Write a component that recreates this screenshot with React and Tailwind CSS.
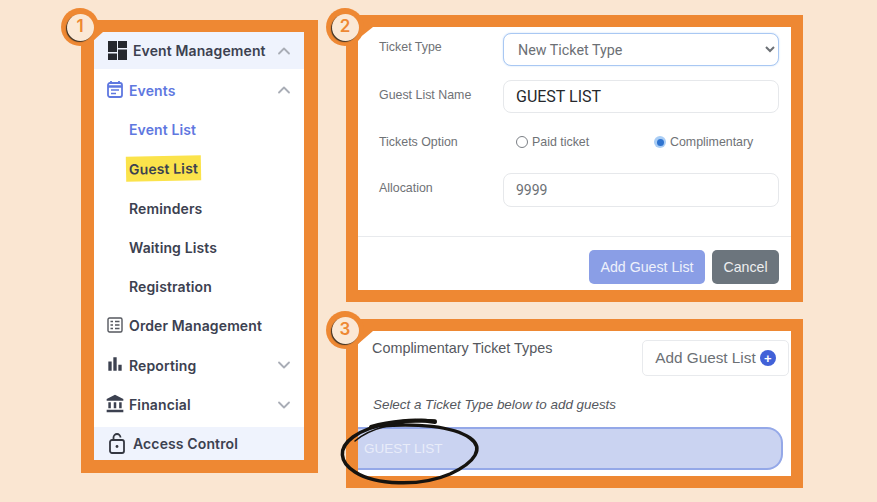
import React from "react";
import { MdBarChart, MdAccountBalance } from "react-icons/md";
import { ChevronUp, ChevronDown } from "lucide-react";

function Badge({ n, cls }) {
  return (
    <div className={"absolute flex items-center justify-center rounded-full bg-[#ee8833] w-[38px] h-[38px] " + cls}>
      <div className="flex items-center justify-center w-[27px] h-[27px] rounded-full bg-[#fbe8d5] shadow-[-1px_1px_1px_#3a3025] text-[#ee8833] text-[17px] font-semibold font-['Inter',sans-serif]">
        {n}
      </div>
    </div>
  );
}

function Corner({ cls }) {
  return <div className={"absolute left-0 top-0 bg-[#ee8833] [clip-path:polygon(0_0,100%_0,0_100%)] " + cls}></div>;
}

function DashIcon() {
  return (
    <svg width="19" height="19" viewBox="0 0 19 19" fill="#26282e" className="shrink-0">
      <rect x="0" y="0" width="9" height="11" />
      <rect x="10" y="0" width="9" height="7" />
      <rect x="0" y="12.5" width="9" height="6.5" />
      <rect x="10" y="8.5" width="9" height="10.5" />
    </svg>
  );
}
function CalendarIcon() {
  return (
    <svg width="16" height="18" viewBox="0 0 16 18" fill="none" stroke="#5f78e0" strokeWidth="1.8" className="-translate-y-[1px]">
      <rect x="1" y="3" width="14" height="14" rx="2" />
      <path d="M1 6.5h14" strokeWidth="2.5" />
      <path d="M4 1v3M12 1v3" />
      <path d="M4 10h8M4 13.5h5" strokeWidth="1.4" />
    </svg>
  );
}
function OrderIcon() {
  return (
    <svg width="16" height="16" viewBox="0 0 16 16" fill="none" stroke="#55585f" strokeWidth="1.4" className="-translate-y-[1px]">
      <rect x="1" y="1" width="14" height="14" rx="1.5" />
      <path d="M3.5 4.5h2.5M3.5 8h2.5M3.5 11.5h2.5M8 4.5h4.5M8 8h4.5M8 11.5h4.5" strokeWidth="1.6" />
    </svg>
  );
}
function LockIcon() {
  return (
    <svg width="16" height="21" viewBox="0 0 16 21" fill="none" stroke="#343741" strokeWidth="1.8" className="shrink-0">
      <rect x="1" y="7" width="14" height="13" rx="2" />
      <path d="M4.5 7V4.5a3.5 3.5 0 0 1 7 0" />
      <circle cx="8" cy="13.5" r="1.4" fill="#343741" stroke="none" />
    </svg>
  );
}

function Row({ icon, label, chev, cls = "h-[39.3px]", text = "text-[#3c4150]" }) {
  return (
    <div className={"flex items-center pr-[10px] pl-[13px] gap-[6px] " + cls}>
      <span className="flex w-[16px] justify-center shrink-0">{icon}</span>
      <span className={"flex-1 " + text}>{label}</span>
      {chev === "up" && <ChevronUp size={20} strokeWidth={2.2} className="text-[#a9adb6]" />}
      {chev === "down" && <ChevronDown size={20} strokeWidth={2.2} className="text-[#a9adb6]" />}
    </div>
  );
}
function Sub({ children, cls = "text-[#3c4150]" }) {
  return <div className={"flex items-center h-[39.3px] pl-[35px] " + cls}>{children}</div>;
}

function Sidebar() {
  return (
    <div className="relative w-[237px] h-[453px] border-[13px] border-t-[12px] border-r-[14px] border-[#ee8833] bg-white">
      <div className="flex flex-col text-[14px] font-semibold tracking-[0.12px] font-['Inter',sans-serif]">
        <div className="flex items-center h-[37px] bg-[#eff3fd] pl-[14px] pr-[10px] gap-[6px]">
          <DashIcon />
          <span className="flex-1 text-[#3c4150]">Event Management</span>
          <ChevronUp size={20} strokeWidth={2.2} className="text-[#a9adb6]" />
        </div>
        <Row cls="h-[39.3px] mt-[1.5px]" icon={<CalendarIcon />} label="Events" text="text-[#5f78e0]" chev="up" />
        <Sub cls="text-[#5f78e0]">Event List</Sub>
        <Sub>
          <span className="bg-[#fbe34b] px-[3px] -ml-[3px] py-[2px] rotate-[-1deg]">Guest List</span>
        </Sub>
        <Sub>Reminders</Sub>
        <Sub>Waiting Lists</Sub>
        <Sub>Registration</Sub>
        <Row icon={<OrderIcon />} label="Order Management" />
        <Row icon={<MdBarChart size={20} className="text-[#3c4150] shrink-0 -translate-y-[1px]" />} label="Reporting" chev="down" />
        <Row icon={<MdAccountBalance size={20} className="text-[#3c4150] shrink-0 -translate-y-[1px]" />} label="Financial" chev="down" />
        <div className="flex items-center h-[33px] mt-[3px] bg-[#eff3fd] pl-[15px] gap-[8px] text-[#3c4150]">
          <LockIcon />
          <span>Access Control</span>
        </div>
      </div>
      <Corner cls="w-[9px] h-[8px]" />
      <Badge n="1" cls="-left-[33px] -top-[24px]" />
    </div>
  );
}

function Label({ children, cls = "pt-[5px]" }) {
  return <div className={"w-[124px] text-[12.4px] text-[#6f7276] " + cls}>{children}</div>;
}

function Form() {
  return (
    <div className="relative w-[457px] h-[287px] border-[12px] border-[#ee8833] bg-white font-['Liberation_Sans',sans-serif]">
      <div className="pl-[21px] pt-[6px]">
        <div className="flex items-start">
          <Label>Ticket Type</Label>
          <select className="w-[276px] h-[33px] pl-[10px] pr-[4px] text-[14.3px] text-[#6c7075] bg-white rounded-[8px] border border-[#a9c8f3] shadow-[0_0_2px_#c7dcf8] outline-none font-['Roboto',sans-serif]">
            <option>New Ticket Type</option>
          </select>
        </div>
        <div className="flex items-start mt-[14px]">
          <Label cls="pt-[6px]">Guest List Name</Label>
          <div className="w-[276px] h-[33px] flex items-center pl-[12px] text-[16px] text-[#26282c] rounded-[8px] border border-[#e6e8eb] font-['Roboto',sans-serif]">
            GUEST LIST
          </div>
        </div>
        <div className="flex items-center h-[29px] mt-[15px] text-[12.4px] text-[#6f7276]">
          <div className="w-[124px]">Tickets Option</div>
          <div className="flex items-center w-[151px] pl-[13px] gap-[4px]">
            <span className="w-[12px] h-[12px] rounded-full border border-[#7b7f85] bg-white"></span>
            <span>Paid ticket</span>
          </div>
          <div className="flex items-center gap-[4px]">
            <span className="flex items-center justify-center w-[12px] h-[12px] rounded-full bg-[#a9cdf5]">
              <span className="w-[7px] h-[7px] rounded-full bg-[#2f74d0]"></span>
            </span>
            <span>Complimentary</span>
          </div>
        </div>
        <div className="flex items-start mt-[16px]">
          <Label cls="pt-[6px]">Allocation</Label>
          <div className="w-[276px] h-[34px] flex items-center pl-[12px] text-[14px] text-[#6c7075] rounded-[8px] border border-[#e6e8eb] font-['Roboto',sans-serif]">
            9999
          </div>
        </div>
      </div>
      <div className="mt-[29px] border-t border-[#e8eaed] pt-[13px] pr-[12px] flex justify-end gap-[7px]">
        <div className="flex items-center justify-center w-[116px] h-[34px] pt-[1px] rounded-[5px] bg-[#8a9ee6] text-[14.2px] text-[#eef1fb]">
          Add Guest List
        </div>
        <div className="flex items-center justify-center w-[67px] h-[34px] pt-[1px] rounded-[5px] bg-[#6c757d] text-[14.2px] text-[#eceeef]">
          Cancel
        </div>
      </div>
      <Corner cls="w-[15px] h-[12px]" />
      <Badge n="2" cls="-left-[32px] -top-[19px]" />
    </div>
  );
}

function TicketTypes() {
  return (
    <div className="relative w-[457px] h-[169px] border-[12px] border-[#ee8833] bg-white font-['Liberation_Sans',sans-serif]">
      <div className="flex items-start justify-between pl-[14px] pr-[2px] pt-[9px]">
        <div className="text-[14.4px] text-[#55585e] -mt-[2px]">Complimentary Ticket Types</div>
        <div className="flex items-center justify-center gap-[4px] w-[147px] h-[36px] rounded-[5px] border border-[#e8eaed] text-[15.3px] text-[#6c7075]">
          Add Guest List
          <span className="flex items-center justify-center w-[16px] h-[16px] rounded-full bg-[#4161d8] text-white text-[13px] font-bold leading-none">+</span>
        </div>
      </div>
      <div className="pl-[15px] mt-[21px] h-[16px] flex items-center text-[13.4px] italic text-[#55585e]">
        Select a Ticket Type below to add guests
      </div>
      <div className="flex items-center mt-[14px] w-[425px] h-[43px] pl-[6px] pt-[1px] bg-[#cad3f1] border-y-2 border-r-2 border-[#94a8e8] rounded-r-[16px] text-[13.5px] text-[#e8ecf9]">
        GUEST LIST
      </div>
      <Corner cls="w-[15px] h-[13px]" />
      <Badge n="3" cls="-left-[32px] -top-[20px]" />
    </div>
  );
}

export default function App() {
  return (
    <div className="relative w-[877px] h-[502px] overflow-hidden bg-[#fae6d2]">
      <div className="flex items-start pl-[81px]">
        <div className="pt-[20px]">
          <Sidebar />
        </div>
        <div className="flex flex-col gap-[17px] pt-[15px] ml-[28px]">
          <Form />
          <TicketTypes />
        </div>
      </div>
      <svg className="absolute left-[335px] top-[410px]" width="150" height="80" viewBox="0 0 150 80" fill="none" stroke="#15130f" strokeLinecap="round">
        <path d="M100 11 C 70 9, 35 14, 18 27 C 3 38, 4 52, 20 62 C 40 75, 85 77, 115 64 C 141 52, 149 38, 135 28 C 118 16, 80 13, 45 16" strokeWidth="3.5" />
        <path d="M100 12 C 80 9, 55 11, 36 17" strokeWidth="4" />
        <path d="M20 31 C 28 24, 40 19, 52 16" strokeWidth="1.5" />
      </svg>
    </div>
  );
}
